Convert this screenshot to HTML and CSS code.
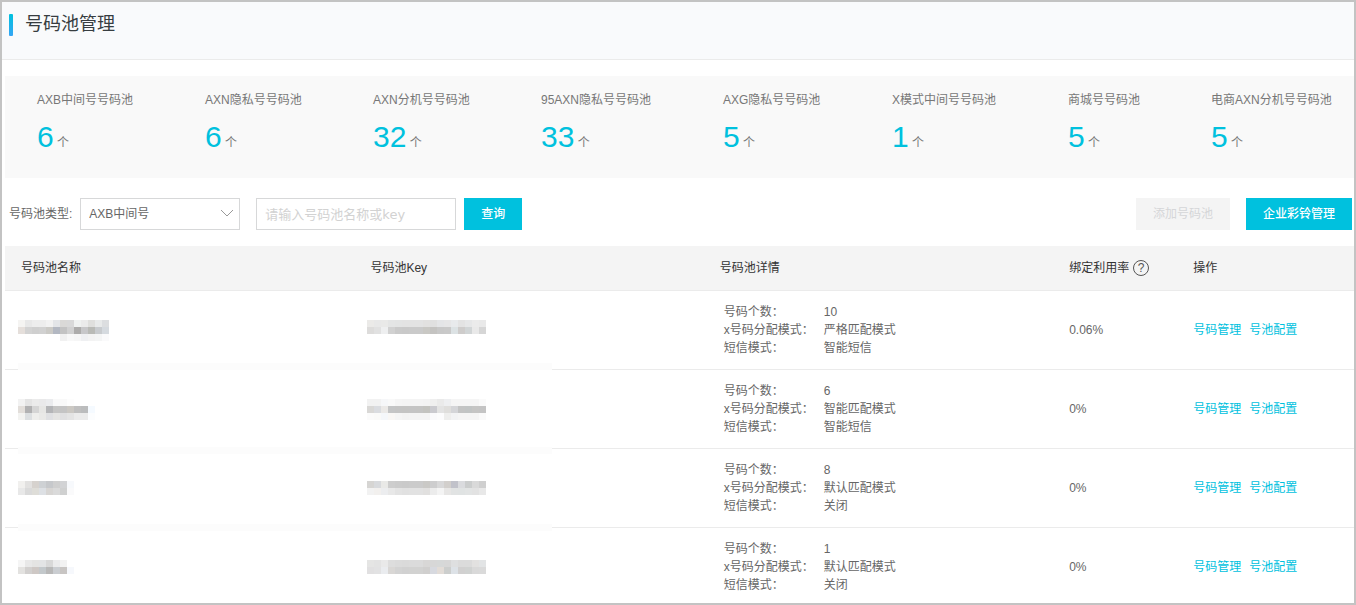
FILE: index.html
```html
<!DOCTYPE html>
<html lang="zh-CN">
<head>
<meta charset="utf-8">
<meta name="viewport" content="width=device-width, initial-scale=1">
<title>号码池管理</title>
<link rel="stylesheet" href="styles.css">
</head>
<body>
<div class="frame">
  <header class="page-head">
    <h1 class="page-title">号码池管理</h1>
  </header>
  <main class="content">
    <section class="stats">
      <div class="stat"><div class="stat-label">AXB中间号号码池</div><div class="stat-value"><b class="stat-num">6</b> 个</div></div>
      <div class="stat"><div class="stat-label">AXN隐私号号码池</div><div class="stat-value"><b class="stat-num">6</b> 个</div></div>
      <div class="stat"><div class="stat-label">AXN分机号号码池</div><div class="stat-value"><b class="stat-num">32</b> 个</div></div>
      <div class="stat"><div class="stat-label">95AXN隐私号号码池</div><div class="stat-value"><b class="stat-num">33</b> 个</div></div>
      <div class="stat"><div class="stat-label">AXG隐私号号码池</div><div class="stat-value"><b class="stat-num">5</b> 个</div></div>
      <div class="stat"><div class="stat-label">X模式中间号号码池</div><div class="stat-value"><b class="stat-num">1</b> 个</div></div>
      <div class="stat"><div class="stat-label">商城号号码池</div><div class="stat-value"><b class="stat-num">5</b> 个</div></div>
      <div class="stat"><div class="stat-label">电商AXN分机号号码池</div><div class="stat-value"><b class="stat-num">5</b> 个</div></div>
    </section>

    <form class="toolbar">
      <label class="toolbar-label" for="pool-type">号码池类型:</label>
      <span class="select-wrap">
        <select class="select" id="pool-type"><option>AXB中间号</option></select>
        <svg class="chevron" width="14" height="8" viewBox="0 0 14 8" aria-hidden="true"><path d="M1 1l6 6 6-6" fill="none" stroke="#999" stroke-width="1"/></svg>
      </span>
      <input class="search" type="text" aria-label="号码池名称或key" placeholder="请输入号码池名称或key">
      <button class="btn btn-primary" type="button">查询</button>
      <div class="toolbar-actions">
        <button class="btn btn-disabled" type="button" disabled>添加号码池</button>
        <button class="btn btn-primary" type="button">企业彩铃管理</button>
      </div>
    </form>

    <table class="pools">
      <colgroup><col class="col-main"><col class="col-main"><col class="col-main"><col class="col-rate"><col></colgroup>
      <thead>
        <tr>
          <th scope="col">号码池名称</th>
          <th scope="col">号码池Key</th>
          <th scope="col">号码池详情</th>
          <th scope="col"><span class="rate-head">绑定利用率<span class="help">?</span></span></th>
          <th scope="col">操作</th>
        </tr>
      </thead>
      <tbody>
        <tr>
          <td><svg class="mosaic" data-tiles="name1"></svg><span class="veil veil-a"></span></td>
          <td><svg class="mosaic" data-tiles="key1"></svg></td>
          <td><dl class="detail"><dt>号码个数：</dt><dd>10</dd><dt>x号码分配模式：</dt><dd>严格匹配模式</dd><dt>短信模式：</dt><dd>智能短信</dd></dl></td>
          <td>0.06%</td>
          <td><div class="links"><a href="#">号码管理</a><a href="#">号池配置</a></div></td>
        </tr>
        <tr>
          <td><svg class="mosaic" data-tiles="name2"></svg><span class="veil veil-b"></span></td>
          <td><svg class="mosaic" data-tiles="key2"></svg></td>
          <td><dl class="detail"><dt>号码个数：</dt><dd>6</dd><dt>x号码分配模式：</dt><dd>智能匹配模式</dd><dt>短信模式：</dt><dd>智能短信</dd></dl></td>
          <td>0%</td>
          <td><div class="links"><a href="#">号码管理</a><a href="#">号池配置</a></div></td>
        </tr>
        <tr>
          <td><svg class="mosaic" data-tiles="name3"></svg><span class="veil veil-c"></span></td>
          <td><svg class="mosaic" data-tiles="key3"></svg></td>
          <td><dl class="detail"><dt>号码个数：</dt><dd>8</dd><dt>x号码分配模式：</dt><dd>默认匹配模式</dd><dt>短信模式：</dt><dd>关闭</dd></dl></td>
          <td>0%</td>
          <td><div class="links"><a href="#">号码管理</a><a href="#">号池配置</a></div></td>
        </tr>
        <tr>
          <td><svg class="mosaic" data-tiles="name4"></svg></td>
          <td><svg class="mosaic" data-tiles="key4"></svg></td>
          <td><dl class="detail"><dt>号码个数：</dt><dd>1</dd><dt>x号码分配模式：</dt><dd>默认匹配模式</dd><dt>短信模式：</dt><dd>关闭</dd></dl></td>
          <td>0%</td>
          <td><div class="links"><a href="#">号码管理</a><a href="#">号池配置</a></div></td>
        </tr>
      </tbody>
    </table>
  </main>
</div>
<script src="mosaic.js"></script>
</body>
</html>
```
FILE: styles.css
```css
* { box-sizing: border-box; }

body {
  margin: 0;
  font: 12px/18px "Liberation Sans", "Noto Sans CJK SC", sans-serif;
  color: #666;
  background: #fff;
}

.frame {
  min-height: 100vh;
  border: 2px solid #c3c3c3;
}

.page-head {
  padding: 11px 7px 23px;
  background: #f9fafc;
  border-bottom: 1px solid #ebebeb;
}

.page-title {
  display: flex;
  align-items: center;
  gap: 12px;
  margin: 0;
  font-size: 18px;
  line-height: 23px;
  font-weight: 400;
  color: #373d41;
}

.page-title::before {
  content: "";
  width: 4px;
  height: 22px;
  border-radius: 1px;
  background: linear-gradient(#00c1de, #35a5f5);
}

.content { padding: 16px 0 0 3px; }

.stats {
  display: grid;
  grid-template-columns: 168fr 168fr 168fr 182fr 169fr 176fr 143fr 143fr;
  padding: 15px 0 17px 32px;
  background: #f9f9f9;
  color: #777;
}

.stat { min-width: 0; white-space: nowrap; }
.stat-value { margin-top: 10px; line-height: 36px; }
.stat-num { font-size: 30px; font-weight: 400; color: #00c1de; }

.toolbar {
  display: flex;
  align-items: center;
  margin: 20px 2px 16px 4px;
}

.toolbar-label { margin-right: 8px; }

.select-wrap { position: relative; margin-right: 16px; }

.select {
  display: block;
  width: 160px;
  height: 32px;
  padding: 0 28px 0 8px;
  border: 1px solid #d7d8d9;
  border-radius: 0;
  background: #fff;
  color: #666;
  font: inherit;
  appearance: none;
}

.chevron {
  position: absolute;
  top: 11px;
  right: 6px;
  pointer-events: none;
}

.search {
  width: 200px;
  height: 32px;
  margin-right: 8px;
  padding: 0 8px;
  border: 1px solid #d7d8d9;
  border-radius: 0;
  font: 13px "DejaVu Sans", "Noto Sans CJK SC", sans-serif;
  color: #666;
}

.search::placeholder { color: #d2d2d2; opacity: 1; }

.toolbar-actions { display: flex; gap: 16px; margin-left: auto; }

.btn {
  height: 32px;
  padding: 0 16px;
  border: 1px solid;
  border-radius: 0;
  font: inherit;
  white-space: nowrap;
}

.btn-primary { background: #00c1de; border-color: #00c1de; color: #fff; font-weight: 500; }
.btn-disabled { background: #f4f4f4; border-color: #f4f4f4; color: #d5d6d8; }

.pools {
  width: 100%;
  table-layout: fixed;
  border-spacing: 0;
}

.col-main { width: 25.9%; }
.col-rate { width: 9.2%; }

.pools th {
  height: 45px;
  padding: 0 0 0 16px;
  background: #f4f4f4;
  border-bottom: 1px solid #ebebeb;
  font-weight: 400;
  text-align: left;
  color: #333;
}

.pools td {
  padding: 12px 0 12px 16px;
  border-bottom: 1px solid #ebebeb;
}

.pools tbody tr { position: relative; }
.pools tbody tr:last-child td { border-bottom: 0; padding-bottom: 9px; }

.rate-head { display: flex; align-items: center; gap: 4px; white-space: nowrap; }

.help {
  width: 16px;
  height: 16px;
  border: 1px solid #555;
  border-radius: 50%;
  line-height: 14px;
  text-align: center;
  color: #555;
}

.detail {
  display: grid;
  grid-template-columns: 100px 1fr;
  margin: 0;
  padding-left: 4px;
}

.detail dd { margin: 0; }

.links { display: flex; gap: 8px; }
.links a { color: #00c1de; text-decoration: none; }

.mosaic { display: block; margin-left: -3px; }

/* Redaction strips that lie across the row separators */
.veil {
  position: absolute;
  left: 13px;
  z-index: 1;
  width: 39.6%;
  height: 7px;
  background: #fcfcfc;
}

.veil-a { bottom: 0; }
.veil-b { bottom: -5px; }
.veil-c { bottom: -3px; }
```
FILE: mosaic.js
```js
// Censored names and keys: rows of 7px tiles, "-" leaves a tile empty.
const TILE = 7;
const tiles = {
  name1: [
    "f5f4f2 e8e8e8 ededed ededed f2f2f2 e3e5e8 dad9d7 d9d9d9 f0f2f1 ebebeb dfdfdd e8eaea dcdee0",
    "e5dfdb d3d3d3 cfcfcf d1d1d1 cbcac6 b3b8c2 c3c3c3 d1d1d1 adacab c7c7c9 b9bab6 c8cbce d5dadf",
    "- - - - - - f1f1f1 f8f8f8 f6f6f6 eff0f2 f3f3f3 f4f5f5 fafafb"
  ],
  key1: [
    "ebeae8 e8e8e8 e9e9e8 e4e5e5 e3e4e4 e3e3e3 e3e3e3 e3e3e3 e2e1e0 e0e0e0 e4e5e7 e6e6e7 e8eaec e3e3e3 e6e7e8 ebebeb e9e9e9",
    "dddcdb e1e1e1 eeeff0 d1d1d1 cacaca c9c9c9 cacaca cacaca c9c8c4 c4c3c1 c8c8c8 c9c9c9 dce2e4 cecccb d1d5d6 e9e9e9 d6d6d6",
    "-"
  ],
  name2: [
    "f2f2f2 e4e4e4 ebebeb e9e9ea ebecee f9f9f9 f9f9f9 fdfdfd - - -",
    "e2deda b1b1b2 d5d5d5 e6e6e4 b4b5b7 c5c5c4 c4c4c4 cbc8c3 bfbfbf bbbcbd f5faff",
    "f3f3f1 dcdfe1 eeeeec e9e9e7 dfe0e2 e5e5e3 e0e0e1 e4e4e4 ebebeb ebebeb fcfdfe"
  ],
  key2: [
    "f2f2f2 f2f2f2 f6f7f9 f9f9f9 f5f5f5 f4f4f4 f4f4f4 f4f4f4 f3f3f3 efefef eaeaea eeeff1 f5f5f5 f5f5f5 f5f5f5 f5f5f5 fafafa",
    "d9d8d6 dadce0 ebe9e7 c4c5c6 c4c4c4 c4c4c3 c4c4c4 c4c4c3 c3c3bf cacacf e3e3e3 dfdedc d4d5d8 c3c4c4 c1c4c4 c5c5c4 c4c4c4",
    "fbfbfb fafaf9 f5f7fa f9f7f5 f5f5f5 f3f3f3 f4f4f4 f4f4f4 f4f4f4 fafafc fcfcfd eeeeed f2f3f4 f5f5f5 f5f5f5 f5f5f5 fafafa"
  ],
  name3: [
    "f1f0ee e2e1e0 d6d2ce ced1d4 c6c8cb cfcfcf d2d3d5 f7f9fc",
    "e8e8e8 dadada deddd8 dde0e4 d7d5d3 dadada cfd0d0 fafafb"
  ],
  key3: [
    "d6d5d3 d8dadd e9e9e7 cdcdcd cbcbcb cacaca cbcbcb cbcbcb cac9c6 cdcdce d8d8d9 d2cfcc c1c2ca dadbde cbcdcd d9d9d9 cfcfcf",
    "f2f2f2 f2f0ee ecedef e8e8e8 e3e3e3 e1e1e1 e2e2e2 e2e2e2 e1e0df ececec f4f4f4 e7e6e5 e1e3e3 e0e3e3 e2e4e4 e2e2e2 e8e8e8"
  ],
  name4: [
    "f5f5f5 e8e8e8 e4e4e3 e3e4e5 d8d8d8 ebebec f2f2f2 -",
    "e3e2e0 d2d0cf cec8c5 c3c8cb b8b8b8 cacdd1 c8c5c3 f6f8fc"
  ],
  key4: [
    "e5e5e4 e3e3e3 e9e9e9 dddddd dbdbdb dadada dbdbdb dbdbdb d8d7d6 d7d7d7 d6d8d8 d7d7d7 dedfe0 dbdbdb dbdbdb e2e1e0 e2e4e5",
    "e1e0e1 e2e2e3 eaecef d9d7d5 d3d3d3 d1d1d1 d2d2d1 d2d2d1 d0cfce d7d9df e2dcd7 cccecd dde2e7 d1d0d0 d0d2d1 d9d9d9 dadada"
  ]
};

document.querySelectorAll(".mosaic").forEach((svg) => {
  const rows = tiles[svg.dataset.tiles].map((row) => row.split(" "));
  svg.setAttribute("width", rows[0].length * TILE);
  svg.setAttribute("height", rows.length * TILE);
  svg.setAttribute("aria-hidden", "true");
  svg.setAttribute("shape-rendering", "crispEdges");
  rows.forEach((row, y) => row.forEach((color, x) => {
    if (color === "-") return;
    const rect = document.createElementNS("http://www.w3.org/2000/svg", "rect");
    rect.setAttribute("x", x * TILE);
    rect.setAttribute("y", y * TILE);
    rect.setAttribute("width", TILE);
    rect.setAttribute("height", TILE);
    rect.setAttribute("fill", "#" + color);
    svg.append(rect);
  }));
});
```
